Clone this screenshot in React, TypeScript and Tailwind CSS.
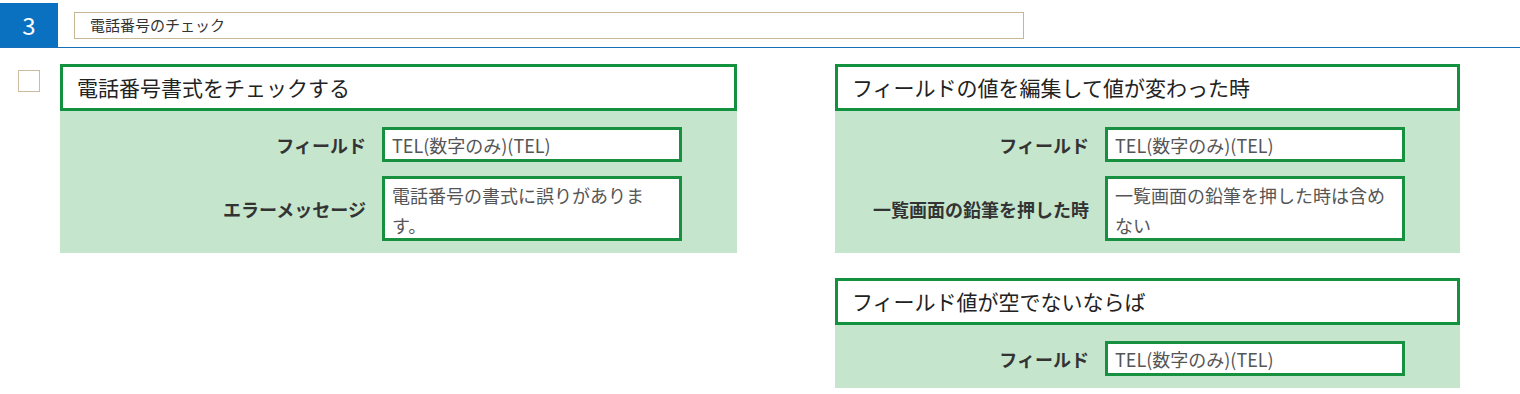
import React from "react"

const font = { fontFamily: '"Noto Sans CJK JP", "Noto Sans", sans-serif' }

function Row({ label, value, tall }: { label: string; value: string; tall?: boolean }) {
  return (
    <div className="flex items-center">
      <div className="flex-1 text-right pr-4 text-[18px] font-bold text-[#333] leading-none">{label}</div>
      <div
        className={`w-[300px] shrink-0 bg-white border-[3px] border-[#17913f] px-[7px] text-[18px] leading-[30px] text-[#555] overflow-hidden ${
          tall ? "h-[65px] pt-[1px]" : "h-[35px]"
        }`}
      >
        {value}
      </div>
    </div>
  )
}

function Card({
  title,
  width,
  rows,
}: {
  title: string
  width: string
  rows: { label: string; value: string; tall?: boolean }[]
}) {
  return (
    <div className={width}>
      <div className="h-[47px] border-[3px] border-[#12923f] bg-white flex items-center pl-[14px] text-[21px] text-[#222]">
        {title}
      </div>
      <div className="bg-[#c5e5cd] pt-4 pb-3 flex flex-col gap-[14px] pr-[55px]">
        {rows.map((r) => (
          <Row key={r.label} {...r} />
        ))}
      </div>
    </div>
  )
}

export default function App() {
  return (
    <div className="w-[1520px] h-[394px] bg-white overflow-hidden" style={font}>
      {/* header */}
      <div className="pt-[3px]">
        <div className="flex items-center border-b border-[#1570b8]">
          <div className="w-[58px] h-[44px] bg-[#0a70c0] text-white text-[24px] flex items-center justify-center">
            3
          </div>
          <div className="ml-4 w-[950px] h-[27px] border border-[#c8b594] flex items-center pl-[15px] text-[15px] text-[#333]">
            電話番号のチェック
          </div>
        </div>
      </div>

      <div className="flex pt-4">
        <div className="pl-[18px] pt-[6px] pr-[20px]">
          <div className="w-[22px] h-[22px] border border-[#cdbba0] bg-white" />
        </div>
        <Card
          title="電話番号書式をチェックする"
          width="w-[677px]"
          rows={[
            { label: "フィールド", value: "TEL(数字のみ)(TEL)" },
            { label: "エラーメッセージ", value: "電話番号の書式に誤りがあります。", tall: true },
          ]}
        />
        <div className="ml-[98px] flex flex-col gap-[25px]">
          <Card
            title="フィールドの値を編集して値が変わった時"
            width="w-[625px]"
            rows={[
              { label: "フィールド", value: "TEL(数字のみ)(TEL)" },
              { label: "一覧画面の鉛筆を押した時", value: "一覧画面の鉛筆を押した時は含めない", tall: true },
            ]}
          />
          <Card
            title="フィールド値が空でないならば"
            width="w-[625px]"
            rows={[{ label: "フィールド", value: "TEL(数字のみ)(TEL)" }]}
          />
        </div>
      </div>
    </div>
  )
}
